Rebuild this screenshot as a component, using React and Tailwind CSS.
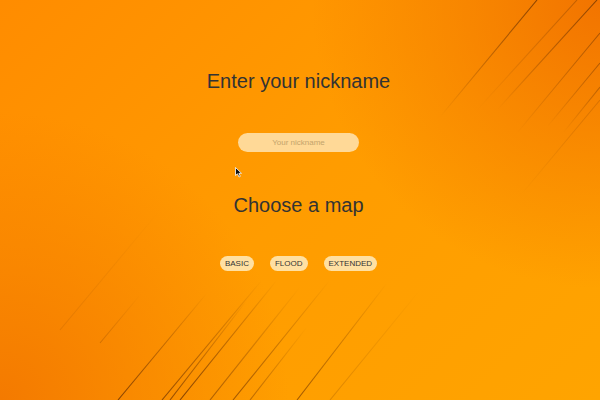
import React from "react";

const bottomLines = [
  [118, 400, 207, 293, 0.9],
  [162, 400, 262, 280, 0.8],
  [170, 400, 247, 300, 0.8],
  [180, 400, 277, 280, 0.9],
  [210, 400, 300, 287, 0.6],
  [233, 400, 330, 280, 0.7],
  [250, 400, 307, 327, 0.5],
  [297, 400, 387, 283, 0.7],
  [100, 343, 140, 295, 0.3],
  [60, 330, 160, 210, 0.15],
  [330, 400, 420, 290, 0.25],
];

const topLines = [
  [537, 0, 440, 117, 0.85],
  [577, 0, 477, 110, 0.4],
  [597, 0, 497, 110, 0.85],
  [600, 33, 517, 133, 0.6],
  [600, 63, 547, 127, 0.55],
  [600, 87, 563, 133, 0.45],
  [600, 100, 520, 196, 0.25],
];

function Streaks() {
  return (
    <svg className="absolute inset-0" width="600" height="400" viewBox="0 0 600 400">
      <defs>
        <linearGradient id="fadeUp" x1="0" y1="1" x2="1" y2="0">
          <stop offset="0" stopColor="#7a3a00" stopOpacity="1" />
          <stop offset="1" stopColor="#7a3a00" stopOpacity="0" />
        </linearGradient>
        <linearGradient id="fadeDown" x1="1" y1="0" x2="0" y2="1">
          <stop offset="0" stopColor="#7a3a00" stopOpacity="1" />
          <stop offset="1" stopColor="#7a3a00" stopOpacity="0" />
        </linearGradient>
      </defs>
      {bottomLines.map(([x1, y1, x2, y2, o], i) => (
        <path key={"b" + i} d={`M${x1} ${y1}L${x2} ${y2}`} stroke="url(#fadeUp)" strokeWidth="1.1" opacity={o} fill="none" />
      ))}
      {topLines.map(([x1, y1, x2, y2, o], i) => (
        <path key={"t" + i} d={`M${x1} ${y1}L${x2} ${y2}`} stroke="url(#fadeDown)" strokeWidth="1.1" opacity={o} fill="none" />
      ))}
    </svg>
  );
}

function Cursor() {
  return (
    <svg className="absolute left-[235px] top-[167px]" width="8" height="11" viewBox="0 0 8 11">
      <path d="M0.5 0.5 L0.5 8.5 L2.5 6.8 L4 10 L5.3 9.4 L3.9 6.3 L6.5 6.3 Z" fill="#111" stroke="#fff" strokeWidth="0.8" />
    </svg>
  );
}

export default function App() {
  return (
    <div
      className="relative w-[600px] h-[400px] overflow-hidden bg-[radial-gradient(circle_at_100%_0%,#f27400_0%,rgba(242,116,0,0)_40%),radial-gradient(circle_at_0%_100%,#f47a00_0%,rgba(244,122,0,0)_40%),linear-gradient(135deg,#ff8c00_0%,#ff9c00_50%,#ffa400_100%)]"
      style={{ fontFamily: '"Liberation Sans", Arial, sans-serif' }}
    >
      <Streaks />
      <div className="relative flex flex-col items-center pt-[69px] pr-[3px]">
        <h1 className="text-[20px] leading-[24px] text-[#333333]">Enter your nickname</h1>
        <input
          className="mt-[40px] w-[121px] h-[19px] rounded-full bg-[#ffd997] text-center text-[8px] text-[#333] placeholder:text-[#c4a46c] outline-none"
          placeholder="Your nickname"
        />
        <h2 className="mt-[41px] text-[20px] leading-[24px] text-[#333333]">Choose a map</h2>
        <div className="mt-[39px] flex gap-[16px]">
          {["BASIC", "FLOOD", "EXTENDED"].map((m) => (
            <button
              key={m}
              className="h-[15px] px-[5px] rounded-full bg-[#ffe0a2] text-[8px] leading-[15px] text-[#333333]"
            >
              {m}
            </button>
          ))}
        </div>
      </div>
      <Cursor />
    </div>
  );
}
